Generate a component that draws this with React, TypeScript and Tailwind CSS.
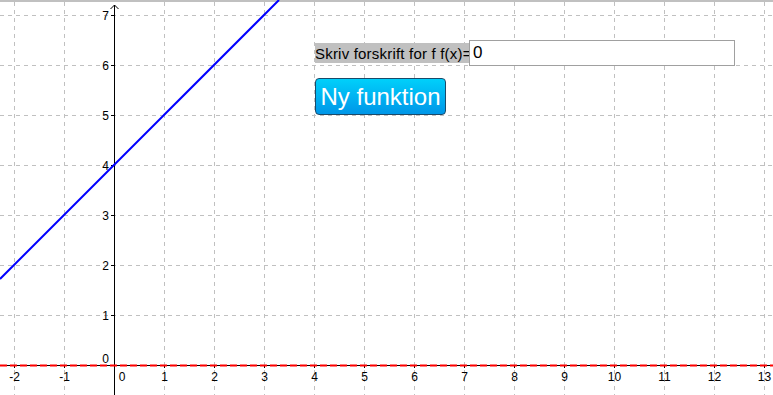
import React from 'react'

const X0 = 114
const Y0 = 365
const U = 50

const xs = Array.from({ length: 16 }, (_, i) => i - 2)
const ys = Array.from({ length: 7 }, (_, i) => i + 1)

function Graph() {
  return (
    <svg width={773} height={395} className="absolute inset-0" style={{ fontFamily: '"Liberation Sans", Arial, sans-serif' }}>
      <rect x={0} y={0} width={773} height={395} fill="#ffffff" />
      <line x1={0} y1={1} x2={773} y2={1} stroke="#c0c0c0" strokeWidth={2} />
      {/* grid */}
      {xs.filter((v) => v !== 0).map((v) => (
        <line key={'gx' + v} x1={X0 + v * U + 0.5} y1={2} x2={X0 + v * U + 0.5} y2={395} stroke="#c0c0c0" strokeDasharray="4 4" />
      ))}
      {ys.map((v) => (
        <line key={'gy' + v} x1={0} y1={Y0 - v * U + 0.5} x2={773} y2={Y0 - v * U + 0.5} stroke="#c0c0c0" strokeDasharray="4 4" />
      ))}
      {/* axes */}
      <line x1={0} y1={Y0 + 0.5} x2={773} y2={Y0 + 0.5} stroke="#000" />
      <line x1={X0 + 0.5} y1={5} x2={X0 + 0.5} y2={395} stroke="#000" />
      <polyline points={`${X0 - 3.5},9 ${X0 + 0.5},5 ${X0 + 4.5},9`} fill="none" stroke="#000" />
      {ys.map((v) => (
        <g key={'ty' + v}>
          <line x1={X0 - 3} y1={Y0 - v * U + 0.5} x2={X0} y2={Y0 - v * U + 0.5} stroke="#000" />
          <text x={X0 - 5} y={Y0 - v * U + 4.5} fontSize={12} textAnchor="end" fill="#000">{v}</text>
        </g>
      ))}
      <text x={X0 - 5} y={Y0 - 2} fontSize={12} textAnchor="end" fill="#000">0</text>
      {xs.map((v) => (
        <g key={'tx' + v}>
          {v !== 0 && <line x1={X0 + v * U + 0.5} y1={Y0} x2={X0 + v * U + 0.5} y2={Y0 + 3} stroke="#000" />}
          <text x={v === 0 ? X0 + 8 : X0 + v * U + 0.5} y={Y0 + 16} fontSize={12} textAnchor="middle" fill="#000">{v}</text>
        </g>
      ))}
      {/* functions */}
      <line x1={0} y1={Y0 + 0.5} x2={773} y2={Y0 + 0.5} stroke="#ff0000" strokeWidth={2} strokeDasharray="7 3" />
      <line x1={0} y1={279} x2={279} y2={0} stroke="#0000ff" strokeWidth={2} />
    </svg>
  )
}

export default function App() {
  return (
    <div className="relative h-[395px] w-[773px] overflow-hidden bg-white font-['Liberation_Sans',Arial,sans-serif]">
      <Graph />
      <div className="absolute left-[315px] top-[40px] flex items-center">
        <span className="flex h-[20px] w-[154px] shrink-0 items-center whitespace-nowrap bg-[#c0c0c0] text-[15px] leading-none tracking-[0.2px] text-black">Skriv forskrift for f f(x)=</span>
        <div className="flex h-[26px] w-[266px] shrink-0 items-center border border-[#a0a0a0] bg-white pl-[3px] text-[17px] text-black">0</div>
      </div>
      <button
        type="button"
        className="absolute left-[315px] top-[78px] flex h-[37px] w-[131px] items-center justify-center rounded-[4px] border border-[#1a4a6a] bg-gradient-to-b from-[#00d0fa] to-[#0096e8] text-[24px] leading-none text-white"
      >
        Ny funktion
      </button>
    </div>
  )
}
